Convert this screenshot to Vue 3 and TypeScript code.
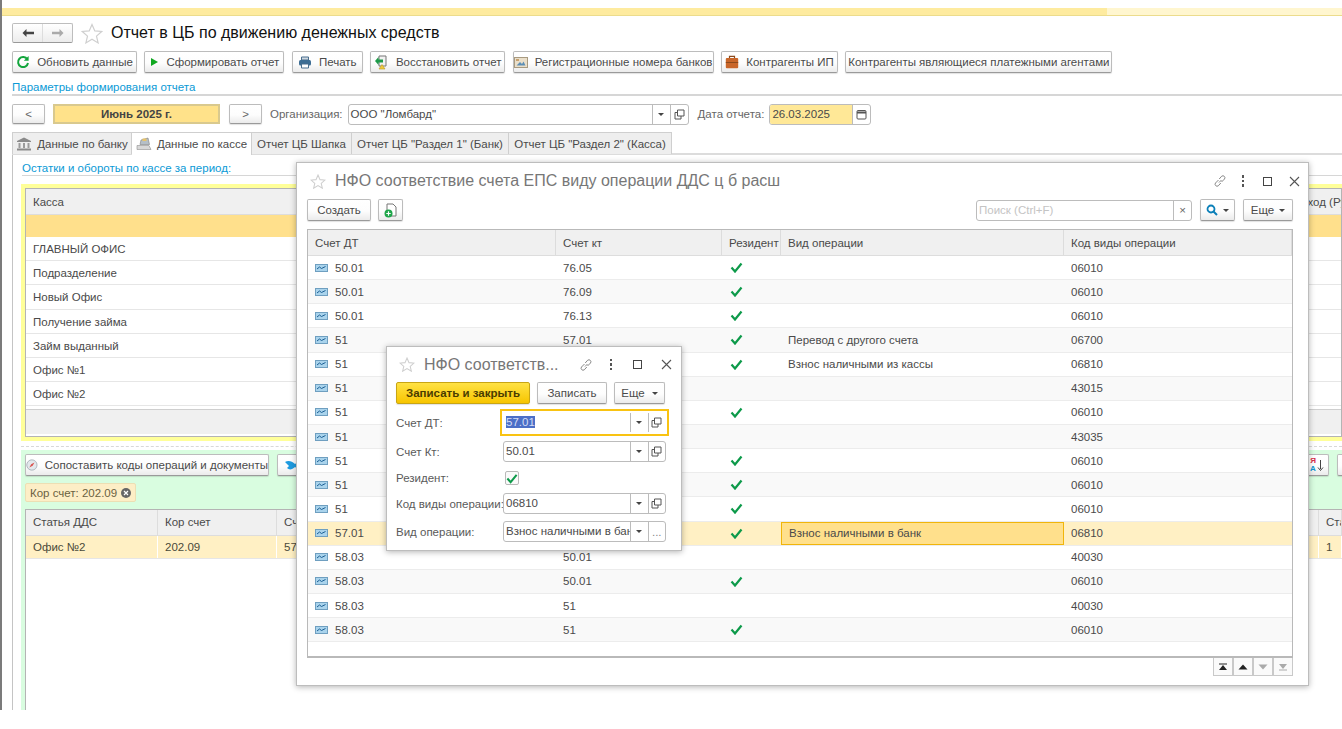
<template>
  <div class="page">
    <div class="shell">
      <div class="edge"></div>
      <div class="content">
        <div class="strip"><div class="strip-main"></div><div class="strip-rest"></div></div>
        <div class="body">
          <div class="titlebar">
            <div class="nav">
              <button class="nav-btn" type="button">
                <svg width="14" height="10" viewBox="0 0 14 10"><path d="M5.5 1 1.5 5l4 4V6.2H13V3.8H5.5z" fill="#444"/></svg>
              </button>
              <button class="nav-btn" type="button">
                <svg width="14" height="10" viewBox="0 0 14 10"><path d="M8.5 1l4 4-4 4V6.2H1V3.8h7.5z" fill="#aaa"/></svg>
              </button>
            </div>
            <svg class="star-big" width="22" height="21" viewBox="0 0 22 21"><path d="M11 1.5l2.8 6.4 6.9.6-5.2 4.6 1.6 6.8L11 16.3l-6.1 3.6 1.6-6.8L1.3 8.5l6.9-.6z" fill="#fff" stroke="#cfcfcf" stroke-width="1.2"/></svg>
            <h1 class="title">Отчет в ЦБ по движению денежных средств</h1>
          </div>

          <div class="toolbar">
            <button class="btn" type="button" style="width:125px">
              <svg width="14" height="14" viewBox="0 0 14 14"><path d="M11.3 4.4A5 5 0 1 0 12 8" fill="none" stroke="#12a53c" stroke-width="2"/><path d="M12.6 1v4.8H7.8z" fill="#12a53c"/></svg>
              Обновить данные
            </button>
            <button class="btn" type="button" style="width:140px">
              <svg width="10" height="10" viewBox="0 0 10 10"><path d="M2 1l7 4-7 4z" fill="#10a820"/></svg>
              Сформировать отчет
            </button>
            <button class="btn" type="button" style="width:71px">
              <svg width="14" height="13" viewBox="0 0 14 13"><path d="M3.5 1h7v3h-7z" fill="#cfd8e0" stroke="#4a6f8f"/><rect x="1" y="4" width="12" height="5.5" rx="1.5" fill="#3d6d94"/><path d="M3.5 8h7v4h-7z" fill="#fff" stroke="#4a6f8f"/></svg>
              Печать
            </button>
            <button class="btn" type="button" style="width:135px">
              <svg width="15" height="15" viewBox="0 0 15 15"><path d="M5 1h7v10H5z" fill="#f2f2f2" stroke="#777"/><path d="M1 6l3.5-4v2.4H9v3.2H4.500V10z" fill="#1c9a48"/><path d="M5 14l3-4.500 3 4.500z" fill="#f0c93e" stroke="#b99a20" stroke-width=".6"/></svg>
              Восстановить отчет
            </button>
            <button class="btn" type="button" style="width:201px">
              <svg width="14" height="11" viewBox="0 0 14 11"><rect x=".5" y=".5" width="13" height="10" fill="#eadfca" stroke="#a89a80"/><path d="M2.500 8.500 6 5l2 2 1.500-2.500L11.500 8.500z" fill="#5d8fb5"/><rect x="2" y="2" width="3" height="2" fill="#c9a26f"/></svg>
              Регистрационные номера банков
            </button>
            <button class="btn" type="button" style="width:117px">
              <svg width="14" height="14" viewBox="0 0 14 14"><path d="M4.500 3V1.300h5V3" fill="none" stroke="#8c4a1c" stroke-width="1.200"/><rect x=".8" y="3" width="12.400" height="10.200" rx="1" fill="#c9662a"/><path d="M.8 7.500h12.400" stroke="#8c4a1c"/></svg>
              Контрагенты ИП
            </button>
            <button class="btn" type="button" style="width:267px">Контрагенты являющиеся платежными агентами</button>
          </div>

          <div class="section-label params">Параметры формирования отчета</div>

          <div class="filters">
            <button class="btn small" type="button" style="width:33px">&lt;</button>
            <div class="period">Июнь 2025 г.</div>
            <button class="btn small" type="button" style="width:33px">&gt;</button>
            <span class="filter-label org-label">Организация:</span>
            <div class="field org">
              <span class="field-text">ООО "Ломбард"</span>
              <span class="field-act"><i class="caret"></i></span>
              <span class="field-act"><svg width="11" height="11" viewBox="0 0 11 11"><path d="M3.500 1h6.500v6H3.500z M1 3.500h2.500M1 3.500V10h6V7" fill="none" stroke="#555"/></svg></span>
            </div>
            <span class="filter-label date-label">Дата отчета:</span>
            <div class="field date">
              <span class="field-text date-text">26.03.2025</span>
              <span class="field-act cal"><svg width="11" height="11" viewBox="0 0 11 11"><rect x="1" y="1.500" width="9" height="8.500" rx="1" fill="#fff" stroke="#555"/><path d="M1 3.500h9" stroke="#555" stroke-width="2"/></svg></span>
            </div>
          </div>

          <div class="tabs">
            <div class="tab" style="width:120px">
              <svg width="16" height="14" viewBox="0 0 16 14"><path d="M8 .5 15 4v1H1V4z" fill="#8a8a8a"/><path d="M2.500 6h2v5h-2zM7 6h2v5H7zM11.500 6h2v5h-2z" fill="#9b9b9b"/><path d="M1 11.500h14V13.500H1z" fill="#8a8a8a"/></svg>
              Данные по банку
            </div>
            <div class="tab active" style="width:120px">
              <svg width="16" height="14" viewBox="0 0 16 14"><path d="M1 8.500h12l2 4H1z" fill="#d8d8d8" stroke="#8f8f8f" stroke-width=".6"/><path d="M5 3l7-2 1.500 6.500H4z" fill="#b5bfc7" stroke="#7d7d7d" stroke-width=".6"/><path d="M6.500 1.500h4V4h-4z" fill="#e7c36a"/></svg>
              Данные по кассе
            </div>
            <div class="tab" style="width:100px">Отчет ЦБ Шапка</div>
            <div class="tab" style="width:157px">Отчет ЦБ "Раздел 1" (Банк)</div>
            <div class="tab" style="width:163px">Отчет ЦБ "Раздел 2" (Касса)</div>
          </div>

          <div class="tabpanel">
            <div class="section-label balance">Остатки и обороты по кассе за период:</div>

            <div class="yellow-box">
              <div class="grid-table">
                <div class="cash-head">
                  <span>Касса</span>
                  <span>Расход (Руб)</span>
                </div>
                <div class="cash-total"></div>
                <div v-for="name in cashRows" :key="name" class="cash-row">{{ name }}</div>
                <div class="cash-foot"></div>
              </div>
            </div>

            <div class="dashed"></div>

            <div class="green-box">
              <div class="green-tools">
                <button class="btn" type="button" style="width:244px">
                  <svg width="16" height="16" viewBox="0 0 16 16"><circle cx="8" cy="8" r="7" fill="#e3e8ec" stroke="#9aa5ad"/><path d="M11.500 4.500 9 9 4.500 11.500 7 7z" fill="#d9534f"/></svg>
                  Сопоставить коды операций и документы
                </button>
                <button class="btn fish-btn" type="button">
                  <svg width="15" height="11" viewBox="0 0 15 11"><path d="M1 2c3-2 7-1 10 2l3-2v7l-3-2C8 10 5 10 3 8l2-2z" fill="#1e9be0"/></svg>
                  Сопоставить
                </button>
                <span class="green-gap"></span>
                <button class="btn sort-btn" type="button">
                  <span class="sort-az"><b class="red">Я</b><b class="blue">А</b></span>
                  <svg width="7" height="13" viewBox="0 0 7 13"><path d="M3.500 1v9M1 8.500l2.500 3 2.500-3" fill="none" stroke="#444"/></svg>
                </button>
                <button class="btn next-btn" type="button"></button>
              </div>
              <div class="chip">Кор счет: 202.09
                <svg width="10" height="10" viewBox="0 0 10 10"><circle cx="5" cy="5" r="5" fill="#666"/><path d="M3 3l4 4M7 3l-4 4" stroke="#fff" stroke-width="1.200"/></svg>
              </div>
              <div class="grid-table lower">
                <div class="lower-head">
                  <span>Статья ДДС</span><span>Кор счет</span><span>Счет кт</span><span>Статус</span>
                </div>
                <div class="lower-row">
                  <span>Офис №2</span><span>202.09</span><span>57.01</span><span>1</span>
                </div>
              </div>
            </div>
          </div>
        </div>
      </div>
    </div>

    <!-- окно списка -->
    <section class="window list-window">
      <header class="win-head">
        <svg width="16" height="15" viewBox="0 0 22 21"><path d="M11 1.500l2.800 6.400 6.900.6-5.200 4.600 1.600 6.800L11 16.300l-6.100 3.600 1.600-6.800L1.300 8.500l6.900-.6z" fill="#fff" stroke="#cfcfcf" stroke-width="1.500"/></svg>
        <h2 class="win-title">НФО соответствие счета ЕПС виду операции ДДС ц б расш</h2>
        <div class="win-icons">
          <svg width="14" height="14" viewBox="0 0 14 14"><path d="M6 8.500 8.500 6M5.500 6 2.500 9a2 2 0 0 0 2.800 2.800l2.500-2.800M8.500 8l3-3a2 2 0 0 0-2.800-2.800L6.200 5" fill="none" stroke="#888"/></svg>
          <span class="dots"><i></i><i></i><i></i></span>
          <span class="win-max"></span>
          <svg width="11" height="11" viewBox="0 0 11 11"><path d="M1 1l9 9M10 1l-9 9" stroke="#555" stroke-width="1.100"/></svg>
        </div>
      </header>

      <div class="win-tools">
        <button class="btn create" type="button">Создать</button>
        <button class="btn doc-btn" type="button">
          <svg width="13" height="15" viewBox="0 0 13 15"><path d="M3 1h6l3 3v9H3z" fill="#fff" stroke="#777"/><circle cx="4.500" cy="10.500" r="4" fill="#1fa64a"/><path d="M4.500 8.300v4.400M2.300 10.500h4.400" stroke="#fff" stroke-width="1.200"/></svg>
        </button>
        <span class="green-gap"></span>
        <div class="field search">
          <span class="field-text placeholder">Поиск (Ctrl+F)</span>
          <span class="field-act clear">×</span>
        </div>
        <button class="btn search-btn" type="button">
          <svg width="12" height="12" viewBox="0 0 12 12"><circle cx="5" cy="5" r="3.500" fill="none" stroke="#0a7fb8" stroke-width="1.800"/><path d="M7.500 7.500 11 11" stroke="#0a7fb8" stroke-width="2"/></svg>
          <i class="caret"></i>
        </button>
        <button class="btn more" type="button">Еще <i class="caret"></i></button>
      </div>

      <div class="list-table">
        <div class="list-row list-head">
          <span>Счет ДТ</span><span>Счет кт</span><span>Резидент</span><span>Вид операции</span><span>Код виды операции</span>
        </div>
        <div v-for="(row, i) in rows" :key="i" class="list-row" :class="{ odd: i % 2 === 1, current: row.current }">
          <span class="acc">
            <svg width="13" height="8" viewBox="0 0 13 8"><rect x=".5" y=".5" width="12" height="7" fill="#a9d3ec" stroke="#6f9fc0"/><path d="M2 5l2.500-2 2 1.500L10.500 2.500" fill="none" stroke="#1b5f94"/></svg>
            {{ row.dt }}
          </span>
          <span>{{ row.kt }}</span>
          <span class="res">
            <svg v-if="row.res" width="13" height="11" viewBox="0 0 13 11"><path d="M1.500 5.500 5 9.500 11.500 1.500" fill="none" stroke="#0d9a4a" stroke-width="2.200"/></svg>
          </span>
          <span :class="{ 'active-cell': row.current }">{{ row.op }}</span>
          <span>{{ row.code }}</span>
        </div>
      </div>

      <div class="pager">
        <button class="page-btn" type="button"><svg width="10" height="8" viewBox="0 0 10 8"><path d="M1 .5h8v1H1zM5 2l4 5H1z" fill="#222"/></svg></button>
        <button class="page-btn" type="button"><svg width="10" height="6" viewBox="0 0 10 6"><path d="M5 .5l4.500 5H.5z" fill="#222"/></svg></button>
        <button class="page-btn" type="button"><svg width="10" height="6" viewBox="0 0 10 6"><path d="M5 5.500l4.500-5H.5z" fill="#aaa"/></svg></button>
        <button class="page-btn" type="button"><svg width="10" height="8" viewBox="0 0 10 8"><path d="M1 6.500h8v1H1zM5 6l4-5H1z" fill="#aaa"/></svg></button>
      </div>
    </section>

    <!-- окно элемента -->
    <section class="window item-window">
      <header class="win-head item-head">
        <svg width="16" height="15" viewBox="0 0 22 21"><path d="M11 1.500l2.800 6.400 6.900.6-5.200 4.600 1.600 6.800L11 16.300l-6.100 3.600 1.600-6.800L1.300 8.500l6.900-.6z" fill="#fff" stroke="#cfcfcf" stroke-width="1.500"/></svg>
        <h2 class="win-title">НФО соответств...</h2>
        <div class="win-icons item-icons">
          <svg width="14" height="14" viewBox="0 0 14 14"><path d="M6 8.500 8.500 6M5.500 6 2.500 9a2 2 0 0 0 2.800 2.800l2.500-2.800M8.500 8l3-3a2 2 0 0 0-2.800-2.800L6.200 5" fill="none" stroke="#888"/></svg>
          <span class="dots"><i></i><i></i><i></i></span>
          <span class="win-max"></span>
          <svg width="11" height="11" viewBox="0 0 11 11"><path d="M1 1l9 9M10 1l-9 9" stroke="#555" stroke-width="1.100"/></svg>
        </div>
      </header>
      <div class="item-tools">
        <button class="btn primary" type="button">Записать и закрыть</button>
        <button class="btn" type="button" style="width:70px">Записать</button>
        <button class="btn" type="button" style="width:51px">Еще <i class="caret"></i></button>
      </div>
      <div class="form">
        <label class="form-row first">
          <span class="form-label">Счет ДТ:</span>
          <div class="field form-field focused">
            <span class="field-text"><span class="selected">57.01</span></span>
            <span class="field-act"><i class="caret"></i></span>
            <span class="field-act"><svg width="11" height="11" viewBox="0 0 11 11"><path d="M3.500 1h6.500v6H3.500z M1 3.500h2.500M1 3.500V10h6V7" fill="none" stroke="#555"/></svg></span>
          </div>
        </label>
        <label class="form-row">
          <span class="form-label">Счет Кт:</span>
          <div class="field form-field">
            <span class="field-text">50.01</span>
            <span class="field-act"><i class="caret"></i></span>
            <span class="field-act"><svg width="11" height="11" viewBox="0 0 11 11"><path d="M3.500 1h6.500v6H3.500z M1 3.500h2.500M1 3.500V10h6V7" fill="none" stroke="#555"/></svg></span>
          </div>
        </label>
        <label class="form-row check-row">
          <span class="form-label">Резидент:</span>
          <span class="check">
            <svg width="13" height="11" viewBox="0 0 13 11"><path d="M1.500 5.500 5 9.500 11.500 1.500" fill="none" stroke="#0d9a4a" stroke-width="2.200"/></svg>
          </span>
        </label>
        <label class="form-row">
          <span class="form-label">Код виды операции:</span>
          <div class="field form-field">
            <span class="field-text">06810</span>
            <span class="field-act"><i class="caret"></i></span>
            <span class="field-act"><svg width="11" height="11" viewBox="0 0 11 11"><path d="M3.500 1h6.500v6H3.500z M1 3.500h2.500M1 3.500V10h6V7" fill="none" stroke="#555"/></svg></span>
          </div>
        </label>
        <label class="form-row">
          <span class="form-label">Вид операции:</span>
          <div class="field form-field">
            <span class="field-text clip">Взнос наличными в банк</span>
            <span class="field-act"><i class="caret"></i></span>
            <span class="field-act ell">...</span>
          </div>
        </label>
      </div>
    </section>
  </div>
</template>

<script setup lang="ts">
interface Row {
  dt: string
  kt: string
  res: boolean
  op: string
  code: string
  current?: boolean
}

const cashRows = ['ГЛАВНЫЙ ОФИС', 'Подразделение', 'Новый Офис', 'Получение займа', 'Займ выданный', 'Офис №1', 'Офис №2']

const rows: Row[] = [
  { dt: '50.01', kt: '76.05', res: true, op: '', code: '06010' },
  { dt: '50.01', kt: '76.09', res: true, op: '', code: '06010' },
  { dt: '50.01', kt: '76.13', res: true, op: '', code: '06010' },
  { dt: '51', kt: '57.01', res: true, op: 'Перевод с другого счета', code: '06700' },
  { dt: '51', kt: '57.01', res: true, op: 'Взнос наличными из кассы', code: '06810' },
  { dt: '51', kt: '57.01', res: false, op: '', code: '43015' },
  { dt: '51', kt: '60.01', res: true, op: '', code: '06010' },
  { dt: '51', kt: '60.01', res: false, op: '', code: '43035' },
  { dt: '51', kt: '62.01', res: true, op: '', code: '06010' },
  { dt: '51', kt: '66.01', res: true, op: '', code: '06010' },
  { dt: '51', kt: '76.09', res: true, op: '', code: '06010' },
  { dt: '57.01', kt: '50.01', res: true, op: 'Взнос наличными в банк', code: '06810', current: true },
  { dt: '58.03', kt: '50.01', res: false, op: '', code: '40030' },
  { dt: '58.03', kt: '50.01', res: true, op: '', code: '06010' },
  { dt: '58.03', kt: '51', res: false, op: '', code: '40030' },
  { dt: '58.03', kt: '51', res: true, op: '', code: '06010' },
]
</script>

<style>
html, body { margin: 0; background: #fff; overflow: hidden; }
</style>

<style scoped>
* { box-sizing: border-box; }
.page {
  position: relative;
  width: 1342px;
  height: 729px;
  overflow: hidden;
  background: #fff;
  font-family: "Liberation Sans", Arial, sans-serif;
  font-size: 11.5px;
  color: #4a4a4a;
}
.shell { display: flex; height: 710px; }
.edge { width: 2px; background: #7b7b7b; flex: none; }
.content { flex: 1; min-width: 0; display: flex; flex-direction: column; }
.strip { display: flex; height: 8px; margin-top: 8px; flex: none; border-bottom: 1px solid #ecdc8c; }
.strip-main { width: 1105px; background: #feeb9f; }
.strip-rest { flex: 1; background: #fff6cf; }
.body { flex: 1; min-height: 0; padding-left: 10px; display: flex; flex-direction: column; }

.titlebar { display: flex; align-items: center; height: 20px; margin-top: 7px; flex: none; }
.nav { display: flex; width: 61px; height: 20px; border: 1px solid #bdbdbd; border-bottom-color: #999; border-radius: 2px; background: linear-gradient(#fff, #ececec); }
.nav-btn { flex: 1; border: 0; background: none; padding: 0; display: flex; align-items: center; justify-content: center; }
.nav-btn + .nav-btn { border-left: 1px solid #ddd; }
.star-big { margin-left: 8px; }
.title { margin: 0 0 0 8px; font-size: 16px; font-weight: 400; color: #111; white-space: nowrap; }

.btn {
  display: inline-flex;
  align-items: center;
  justify-content: center;
  gap: 7px;
  height: 22px;
  padding: 0;
  border: 1px solid #bcbcbc;
  border-bottom-color: #9a9a9a;
  border-radius: 2px;
  background: linear-gradient(#ffffff, #fdfdfd 55%, #ebebeb);
  box-shadow: 0 1px 1px rgba(0, 0, 0, .12);
  font: inherit;
  color: #4a4a4a;
  white-space: nowrap;
  flex: none;
}
.btn.small { height: 20px; color: #666; }
.toolbar { display: flex; gap: 7.4px; margin-top: 8px; height: 22px; flex: none; }

.section-label { color: #0b9ad6; height: 14px; line-height: 13px; flex: none; }
.params { margin-top: 8px; height: 15px; border-bottom: 2px solid #d6d6d6; }

.filters { display: flex; align-items: center; height: 20px; margin-top: 8px; flex: none; }
.period {
  width: 167px;
  height: 20px;
  margin: 0 9px 0 8px;
  border: 2px solid #d9c98e;
  background: #ffe28a;
  font-weight: 700;
  color: #444;
  text-align: center;
  line-height: 16px;
}
.filter-label { color: #666; white-space: nowrap; }
.org-label { margin: 0 5px 0 8px; }
.date-label { margin: 0 5px 0 9px; }
.field {
  display: flex;
  align-items: stretch;
  height: 21px;
  border: 1px solid #bcbcbc;
  border-radius: 3px;
  background: #fff;
  overflow: hidden;
  flex: none;
}
.field-text { flex: 1; min-width: 0; padding-left: 2px; line-height: 19px; color: #4a4a4a; white-space: nowrap; overflow: hidden; }
.field-act { width: 18px; flex: none; border-left: 1px solid #bcbcbc; display: flex; align-items: center; justify-content: center; color: #777; }
.org { width: 341px; }
.date { width: 102px; }
.date-text { background: #ffe897; }
.cal { width: 18px; }
.caret { display: inline-block; width: 0; height: 0; border: 3px solid transparent; border-top: 3px solid #444; margin-top: 3px; }

.tabs { display: flex; height: 23px; margin-top: 8px; border-bottom: 2px solid #dcdcdc; flex: none; }
.tab {
  height: 22px;
  display: flex;
  align-items: center;
  justify-content: center;
  gap: 5px;
  border: 1px solid #cfcfcf;
  border-left: 0;
  border-bottom: 0;
  background: #eeeeee;
  color: #4a4a4a;
  white-space: nowrap;
}
.tab:first-child { border-left: 1px solid #cfcfcf; }
.tab.active { background: #fff; height: 23px; position: relative; z-index: 1; }

.tabpanel { flex: 1; min-height: 0; display: flex; flex-direction: column; border-left: 1px solid #c4c4c4; padding-left: 8px; }
.balance { margin: 7px 0 0 1px; height: 14px; border-bottom: 1px solid #d6d6d6; padding-bottom: 0; }

.yellow-box { margin-top: 8px; height: 257px; flex: none; padding: 4px 0 4px 4px; background: #ffff99; }
.grid-table { border: 1px solid #b4b4b4; background: #fff; height: 100%; }
.cash-head { height: 26px; background: #f0f0f0; border-bottom: 1px solid #ddd; display: flex; justify-content: space-between; align-items: center; padding: 0 0 0 7px; }
.cash-head span:last-child { width: 53px; white-space: nowrap; overflow: hidden; }
.cash-total { height: 22px; background: #ffe08c; }
.cash-row { height: 24.2px; line-height: 24px; padding-left: 7px; border-bottom: 1px solid #e6e6e6; color: #4a4a4a; }
.cash-foot { height: 25px; margin-top: 3px; background: #f0f0f0; border-top: 1px solid #cfcfcf; }

.dashed { margin-top: 5px; height: 0; border-top: 1px dashed #d8d8d8; flex: none; }
.green-box { margin-top: 3px; flex: 1; min-height: 0; padding: 4px 0 0 4px; background: #d9fde0; display: flex; flex-direction: column; }
.green-tools { display: flex; align-items: center; gap: 8px; height: 22px; flex: none; }
.green-gap { flex: 1; }
.fish-btn { width: 200px; justify-content: flex-start; padding-left: 6px; }
.sort-btn { width: 24px; gap: 1px; }
.next-btn { width: 24px; margin-right: -19px; }
.sort-az { display: flex; flex-direction: column; font-size: 8px; line-height: 8px; }
.red { color: #d9304a; }
.blue { color: #1095d0; }
.chip {
  display: inline-flex;
  align-items: center;
  gap: 4px;
  align-self: flex-start;
  height: 19px;
  margin-top: 7px;
  padding: 0 4px 0 4px;
  background: #fdeec6;
  border: 1px solid #ecdfb4;
  border-radius: 2px;
  color: #6b6242;
}
.lower { margin-top: 7px; flex: 1; min-height: 0; border-right: 0; border-bottom: 0; }
.lower-head, .lower-row { display: grid; grid-template-columns: 132px 119px 1042px auto; }
.lower-head { height: 26px; background: #f0f0f0; border-bottom: 1px solid #ddd; }
.lower-head span { line-height: 25px; padding-left: 7px; border-right: 1px solid #ddd; white-space: nowrap; overflow: hidden; }
.lower-row { height: 23px; background: #fff0c4; border-bottom: 1px solid #e6e6e6; }
.lower-row span { line-height: 22px; padding-left: 7px; border-right: 1px solid #fff; color: #4a4a3a; }

.window {
  position: absolute;
  background: #fff;
  border: 1px solid #bdbdbd;
  box-shadow: 0 1px 6px rgba(0, 0, 0, .3);
  display: flex;
  flex-direction: column;
}
.list-window { left: 296px; top: 162px; width: 1013px; height: 524px; padding: 0 15px 0 10px; }
.item-window { left: 386px; top: 346px; width: 296px; height: 205px; padding: 0 15px 0 9px; }
.win-head { display: flex; align-items: center; height: 36px; flex: none; padding-left: 3px; }
.win-title { margin: 0 0 0 9px; font-size: 16px; font-weight: 400; color: #777; white-space: nowrap; }
.win-icons { margin-left: auto; margin-right: -7px; display: flex; align-items: center; gap: 15px; }
.dots { display: flex; flex-direction: column; gap: 2px; }
.dots i { display: block; width: 2.500px; height: 2.500px; background: #555; }
.win-max { width: 9px; height: 9px; border: 1px solid #444; margin: 0 2px 0 4px; }

.win-tools { display: flex; align-items: center; height: 22px; flex: none; }
.create { width: 64px; }
.doc-btn { width: 25px; margin-left: 7px; }
.search { width: 216px; height: 21px; }
.placeholder { color: #c4c4c4; }
.clear { color: #666; }
.search-btn { width: 35px; margin-left: 8px; gap: 5px; }
.more { width: 50px; margin-left: 8px; gap: 5px; }

.list-table { margin-top: 8px; height: 429px; flex: none; border: 1px solid #b9b9b9; border-width: 1px 1px 2px 1px; overflow: hidden; }
.list-row { display: grid; grid-template-columns: 248px 166px 59px 283px 1fr; height: 24.150px; border-bottom: 1px solid #ececec; }
.list-row > span { display: flex; align-items: center; padding-left: 7px; white-space: nowrap; overflow: hidden; color: #4a4a4a; }
.list-head { height: 26px; background: #f0f0f0; border-bottom: 1px solid #ddd; }
.list-head > span { border-right: 1px solid #dcdcdc; }
.list-row.odd { background: #f9f9f9; }
.list-row.current { background: #fff0c4; }
.acc { gap: 7px; }
.res { padding-left: 8px !important; }
.active-cell { background: #ffe08c; border: 1px solid #f1b50a; }

.pager { display: flex; justify-content: flex-end; height: 18px; margin-top: 0; flex: none; }
.page-btn { width: 20px; height: 18px; padding: 0; border: 1px solid #c9c9c9; border-top: 0; border-left-width: 1px; background: #fafafa; display: flex; align-items: center; justify-content: center; }

.item-head { height: 35px; padding-left: 3px; }
.item-icons { gap: 17px; margin-right: -6px; }
.item-tools { display: flex; gap: 7px; height: 22px; flex: none; }
.primary {
  width: 134px;
  background: linear-gradient(#ffe244, #f7c500);
  border-color: #c8a514;
  font-weight: 700;
  color: #4a3c00;
}
.form { margin-top: 8px; }
.form-row { display: flex; align-items: center; height: 21px; margin-bottom: 7px; color: #5a5a5a; white-space: nowrap; }
.first { height: 21px; margin-top: 0; margin-bottom: 8px; }
.form-label { width: 107px; flex: none; color: #5a5a5a; }
.form-field { width: 163px; }
.form-field .field-act { width: 17.500px; }
.focused { outline: 2px solid #f9c312; outline-offset: 1px; border-radius: 0; border-color: transparent; }
.selected { background: #4c6fc7; color: #d5def5; }
.check-row { height: 18px; margin-bottom: 6px; }
.check { width: 14px; height: 14px; border: 1px solid #b9b9b9; border-radius: 2px; display: flex; align-items: flex-end; margin-left: 2px; background: #fafafa; }
.ell { color: #888; align-items: flex-end; padding-bottom: 3px; }
.clip { overflow: hidden; }
</style>
